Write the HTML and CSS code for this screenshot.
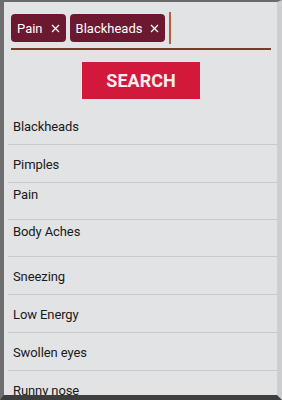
FILE: index.html
```html
<!DOCTYPE html>
<html lang="en">
  <head>
    <meta charset="UTF-8" />
    <title>Symptoms</title>
    <link rel="stylesheet" href="styles.css">
  </head>
  <body>
    <div class="screen">
      <div class="tag-input">
        <span class="chip">Pain
          <svg class="chip-x" width="9" height="9" viewBox="0 0 9 9"><path d="M1 1L8 8M8 1L1 8" stroke="#fff" stroke-width="1.3"/></svg>
        </span>
        <span class="chip">Blackheads
          <svg class="chip-x" width="9" height="9" viewBox="0 0 9 9"><path d="M1 1L8 8M8 1L1 8" stroke="#fff" stroke-width="1.3"/></svg>
        </span>
        <span class="caret"></span>
      </div>

      <div class="search-row">
        <button class="search-btn">SEARCH</button>
      </div>

      <ul class="results">
        <li class="row">Blackheads</li>
        <li class="row">Pimples</li>
        <li class="row row-top">Pain</li>
        <li class="row row-top">Body Aches</li>
        <li class="row">Sneezing</li>
        <li class="row">Low Energy</li>
        <li class="row">Swollen eyes</li>
        <li class="row">Runny nose</li>
      </ul>
    </div>
  </body>
</html>
```

FILE: styles.css
```css
html,
body {
  margin: 0;
  padding: 0;
  background: #3c3c3c;
}

body {
  font-family: Roboto, "Noto Sans", sans-serif;
  color: #1a1a1a;
}

.screen {
  width: 282px;
  height: 400px;
  box-sizing: border-box;
  overflow: hidden;
  background: #e2e3e5;
  border-left: 4px solid #6e6e6e;
  border-top: 2px solid #6a6a6a;
  border-right: 5px solid #cdcecf;
  border-bottom: 5px solid #3e3e3e;
}

/* chips + cursor */
.tag-input {
  display: flex;
  align-items: center;
  gap: 4px;
  margin: 0 6px 0 7px;
  padding: 10px 0 4px;
  border-bottom: 2px solid #7a3b2c;
}

.chip {
  display: inline-flex;
  align-items: center;
  height: 28px;
  padding: 0 6px 0 6px;
  background: #6b1830;
  color: #fff;
  font-size: 13px;
  border-radius: 4px;
  box-sizing: border-box;
}

.chip-x {
  margin-left: 8px;
}

.caret {
  width: 2px;
  height: 32px;
  background: #b0603c;
}

.search-row {
  display: flex;
  padding-left: 78px;
  margin-top: 12px;
}

.search-btn {
  width: 118px;
  height: 37px;
  border: none;
  background: #d2183b;
  color: #fbeef0;
  font-family: Roboto, sans-serif;
  font-weight: bold;
  font-size: 18px;
  padding: 0;
}

.results {
  list-style: none;
  margin: 8px 0 0;
  padding: 0 0 0 4px;
}

.row {
  height: 38px;
  box-sizing: border-box;
  padding: 12px 0 0 5px;
  font-size: 13px;
  letter-spacing: -0.1px;
  border-bottom: 1px solid #c9cacc;
}

.row-top {
  padding-top: 4px;
  height: 37px;
}
```
